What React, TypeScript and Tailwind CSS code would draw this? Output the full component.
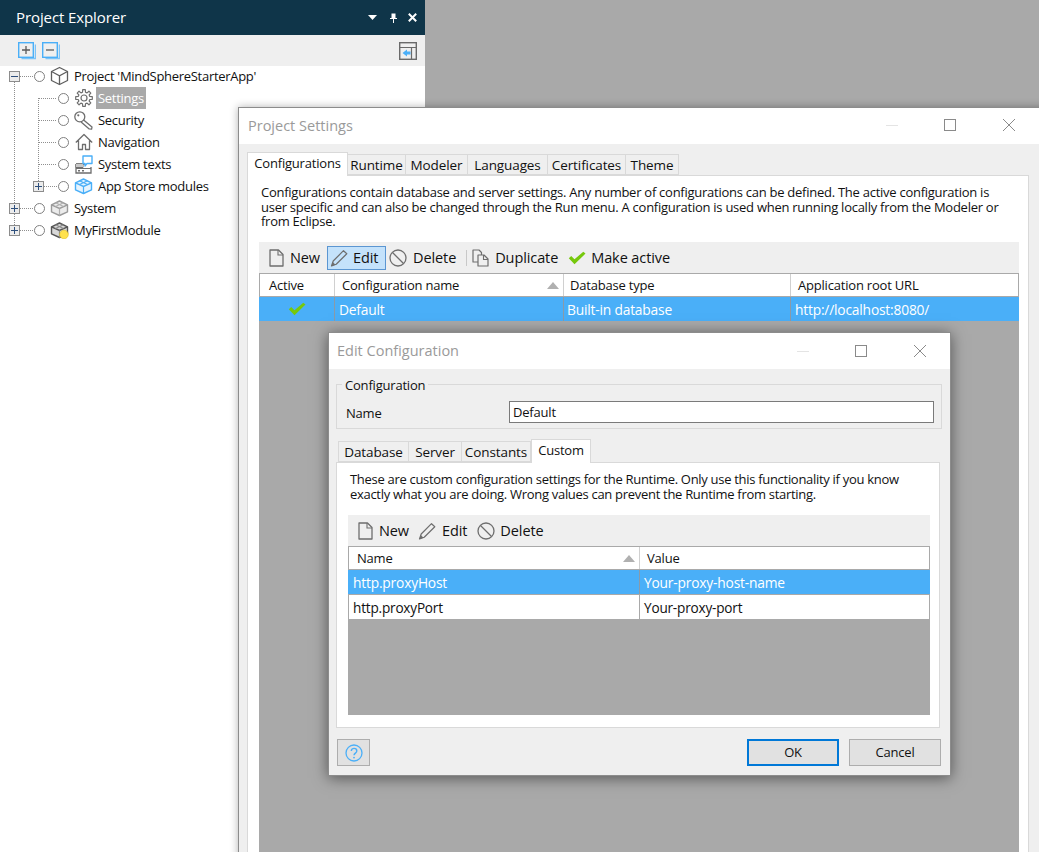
import React from "react";

const G = "#6e6e6e";

function Svg({ w, h, className, children }: { w: number; h: number; className?: string; children: React.ReactNode }) {
  return (
    <svg width={w} height={h} viewBox={`0 0 ${w} ${h}`} fill="none" className={`shrink-0 ${className ?? ""}`}>
      {children}
    </svg>
  );
}

const Cube = () => (
  <Svg w={19} h={20}>
    <path d="M9.500 1.500 17.500 5.500v9L9.500 18.500 1.500 14.500v-9Z" stroke="#5f5f5f" strokeWidth="1.300" strokeLinejoin="round" />
    <path d="M1.500 5.500 9.500 9.800 17.500 5.500M9.500 9.800v8.700" stroke="#5f5f5f" strokeWidth="1.300" />
  </Svg>
);

const Module = ({ color, fill, band, dot }: { color: string; fill: string; band: string; dot?: boolean }) => (
  <Svg w={19} h={18}>
    <path d="M9.500 2 17.500 5.800v7L9.500 16.500 1.500 12.800v-7Z" fill={fill} stroke={color} strokeWidth="1.400" strokeLinejoin="round" />
    <path d="M1.500 5.800 9.500 9.500 17.500 5.800" stroke={color} strokeWidth="1.400" />
    <path d="M9.500 9.500v7M5.500 3.800l8 3.700M13.500 3.800l-8 3.700" stroke={band} strokeWidth="1.200" />
    {dot && <circle cx="14" cy="13.500" r="4.300" fill="#ffe14d" stroke="#e0bf1a" strokeWidth="0.600" />}
  </Svg>
);

function gearPath(cx: number, cy: number, ro: number, ri: number, teeth: number) {
  const pts: string[] = [];
  const step = (Math.PI * 2) / teeth;
  for (let i = 0; i < teeth; i++) {
    const a = i * step - Math.PI / 2;
    const o = step * 0.2;
    const n = step * 0.32;
    const list: [number, number][] = [
      [ri, a - n],
      [ro, a - o],
      [ro, a + o],
      [ri, a + n],
    ];
    for (const [r, t] of list) pts.push(`${(cx + r * Math.cos(t)).toFixed(2)} ${(cy + r * Math.sin(t)).toFixed(2)}`);
  }
  return "M" + pts.join("L") + "Z";
}

const Gear = () => (
  <Svg w={18} h={18}>
    <circle cx="9" cy="9" r="3" stroke={G} strokeWidth="1.200" />
    <path d={gearPath(9, 9, 8.4, 6, 8)} stroke={G} strokeWidth="1.200" strokeLinejoin="round" />
  </Svg>
);

const Key = () => (
  <Svg w={19} h={19}>
    <circle cx="5.800" cy="5.800" r="5" stroke={G} strokeWidth="1.300" />
    <circle cx="4.300" cy="4.300" r="1.100" fill={G} />
    <path d="m9.600 9 8.400 7-.4 2.200-2.400-.3-8.100-7" stroke={G} strokeWidth="1.300" strokeLinejoin="round" />
  </Svg>
);

const Home = () => (
  <Svg w={18} h={18}>
    <path d="M.8 9.500 9 1.500l8.200 8M3.500 7.500v9h4v-5h3v5h4v-9" stroke={G} strokeWidth="1.300" strokeLinejoin="round" />
  </Svg>
);

const SysTexts = () => (
  <Svg w={18} h={19}>
    <path d="M1 9h9M1 9v9h15V12" stroke={G} strokeWidth="1.300" />
    <path d="M1 9h7v3.500H1zM1 13.500h15" stroke={G} strokeWidth="1" />
    <rect x="1" y="9" width="7" height="3" fill="#c8c8c8" />
    <path d="M3 15.800h2M7 15.800h2" stroke={G} strokeWidth="1.500" />
    <path d="M8 1h9v7.500h-5l-2 2.500V8.500H8Z" fill="#fff" stroke="#4aaff8" strokeWidth="1.400" strokeLinejoin="round" />
  </Svg>
);

const Plus = () => (
  <span className="w-[11px] h-[11px] border border-[#8c8c8c] bg-[#ececec] flex items-center justify-center shrink-0">
    <Svg w={9} h={9}>
      <path d="M1 4.500h7M4.500 1v7" stroke="#2e4f7c" strokeWidth="1" />
    </Svg>
  </span>
);
const Minus = () => (
  <span className="w-[11px] h-[11px] border border-[#8c8c8c] bg-[#ececec] flex items-center justify-center shrink-0">
    <Svg w={9} h={9}>
      <path d="M1 4.500h7" stroke="#2e4f7c" strokeWidth="1" />
    </Svg>
  </span>
);

const Radio = () => <span className="w-[11px] h-[11px] rounded-full border border-[#808080] bg-white shrink-0" />;

function TreeRow({
  depth,
  expander,
  icon,
  label,
  selected,
}: {
  depth: 0 | 1;
  expander?: React.ReactNode;
  icon: React.ReactNode;
  label: string;
  selected?: boolean;
}) {
  return (
    <div className={`h-[22px] flex items-center ${depth === 0 ? "pl-[9px]" : "pl-[33px]"}`}>
      <span className="w-[11px] h-[11px] shrink-0">{expander}</span>
      <span className="w-[14px] shrink-0" />
      <Radio />
      <span className="w-[5px] shrink-0" />
      <span className="w-[19px] flex justify-center shrink-0">{icon}</span>
      <span
        className={`ml-[3px] h-[22px] px-[2px] flex items-center whitespace-nowrap tracking-[-0.3px] ${
          selected ? "bg-[#a9a9a9] text-white" : "text-[#111]"
        }`}
      >
        {label}
      </span>
    </div>
  );
}

function TreeLines() {
  const d = "#8f8f8f";
  return (
    <svg width={80} height={180} className="absolute left-0 top-0 pointer-events-none" fill="none">
      <g stroke={d} strokeDasharray="1 1">
        <path d="M14.500 17V165" />
        <path d="M38.500 33V121" />
        <path d="M20 11.500h13M20 143.500h13M20 165.500h13M44 121.500h13" />
        <path d="M39 33.500h18M39 55.500h18M39 77.500h18M39 99.500h18" />
      </g>
    </svg>
  );
}

function DocIcon() {
  return (
    <Svg w={15} h={18}>
      <path d="M1 1h8.500L14 5.500V17H1Z" stroke={G} strokeWidth="1.300" strokeLinejoin="round" />
      <path d="M9 1v5h5" stroke={G} strokeWidth="1.100" />
    </Svg>
  );
}
function PenIcon() {
  return (
    <Svg w={19} h={18}>
      <path d="M3.200 12 13.500 1.700l3.300 3L6.200 15.200 1.500 17Z" stroke={G} strokeWidth="1.200" strokeLinejoin="round" />
      <path d="M1.500 17 2.800 13 5.500 15.700Z" fill={G} />
    </Svg>
  );
}
function BanIcon() {
  return (
    <Svg w={18} h={18}>
      <circle cx="9" cy="9" r="8" stroke={G} strokeWidth="1.300" />
      <path d="M3.500 3.500l11 11" stroke={G} strokeWidth="1.300" />
    </Svg>
  );
}
function DupIcon() {
  return (
    <Svg w={17} h={18}>
      <path d="M6 13H1V1h6l2.500 2.500V6" stroke={G} strokeWidth="1.200" strokeLinejoin="round" />
      <path d="M6 6h6l4 4v7H6Z" stroke={G} strokeWidth="1.200" strokeLinejoin="round" />
      <path d="M11.500 6v4.500H16" stroke={G} strokeWidth="1.100" />
    </Svg>
  );
}
function Check() {
  return (
    <svg width={18} height={14} viewBox="0 0 18 14" className="shrink-0">
      <path d="M.8 7.200 3.200 5l3.300 3.300L15.300.7l2.200 1.900L6.500 13.300Z" fill="#76c80c" />
    </svg>
  );
}

function WinButtons() {
  return (
    <div className="flex items-center h-full">
      <span className="w-[12px] h-px bg-[#e4e4e4]" />
      <span className="ml-[46px] w-[12px] h-[12px] border border-[#8a8a8a]" />
      <Svg w={14} h={14} className="ml-[46px]">
        <path d="M1 1l12 12M13 1 1 13" stroke="#8a8a8a" strokeWidth="1" />
      </Svg>
    </div>
  );
}

function Tabs({ items, active, left }: { items: { l: string; w: string }[]; active: string; left: string }) {
  return (
    <div className={`flex items-end h-[23px] relative z-10 ${left}`}>
      {items.map((t) =>
        t.l === active ? (
          <div
            key={t.l}
            className={`${t.w} h-[24px] -mb-px bg-white border border-[#d9d9d9] border-b-0 flex items-start justify-center pt-[3px] whitespace-nowrap text-[#111]`}
          >
            {t.l}
          </div>
        ) : (
          <div
            key={t.l}
            className={`${t.w} h-[21px] pt-px bg-[#efefef] border border-[#d9d9d9] border-l-0 first:border-l flex items-center justify-center whitespace-nowrap text-[#111] text-[13.500px] tracking-[-0.1px]`}
          >
            {t.l}
          </div>
        )
      )}
    </div>
  );
}

function ToolItem({ icon, label, cls, gap }: { icon: React.ReactNode; label: string; cls?: string; gap: string }) {
  return (
    <div className={`flex items-center whitespace-nowrap text-[#111] text-[14.500px] tracking-[-0.1px] ${gap} ${cls ?? ""}`}>
      {icon}
      <span>{label}</span>
    </div>
  );
}

const Sort = () => (
  <svg width={12} height={7} className="shrink-0">
    <path d="M0 7 6 0l6 7Z" fill="#b0b0b0" />
  </svg>
);

export default function App() {
  return (
    <div className="relative w-[1039px] h-[852px] overflow-hidden bg-[#a9a9a9] font-['Open_Sans',sans-serif] text-[13px] leading-[15px] tracking-[-0.2px]">
      {/* Project Explorer panel */}
      <div className="w-[425px] h-[852px] bg-white flex flex-col">
        <div className="h-[35px] bg-[#0f3549] flex items-center pl-[16px] pr-[8px] text-white">
          <span className="text-[15px] tracking-[-0.1px]">Project Explorer</span>
          <div className="ml-auto flex items-center">
            <svg width={9} height={5} className="mr-[13px]">
              <path d="M0 0h9L4.500 5Z" fill="#fff" />
            </svg>
            <svg width={7} height={10} className="mr-[11px]" fill="none">
              <path d="M1.500 .5h4v4.500h1.500v1H0V5h1.500ZM3 6h1v4H3Z" fill="#fff" />
            </svg>
            <svg width={9} height={9} fill="none">
              <path d="M.8.8l7.400 7.400M8.200.8.800 8.200" stroke="#fff" strokeWidth="2" />
            </svg>
          </div>
        </div>
        <div className="h-[31px] bg-[#efefef] flex items-center pl-[18px] pr-[8px]">
          <svg width={18} height={18} fill="none" className="mr-[6px]">
            <path d="M3.500 16.500h14v-14" stroke="#7cc3f7" strokeWidth="1.500" />
            <rect x=".7" y=".7" width="14.600" height="14.600" stroke="#4aaff8" strokeWidth="1.400" />
            <path d="M4 8h8M8 4v8" stroke="#5a5a5a" strokeWidth="1.300" />
          </svg>
          <svg width={18} height={18} fill="none">
            <path d="M3.500 16.500h14v-14" stroke="#7cc3f7" strokeWidth="1.500" />
            <rect x=".7" y=".7" width="14.600" height="14.600" stroke="#4aaff8" strokeWidth="1.400" />
            <path d="M4 8h8" stroke="#5a5a5a" strokeWidth="1.300" />
          </svg>
          <svg width={18} height={18} fill="none" className="ml-auto">
            <rect x=".7" y=".7" width="16.600" height="16.600" stroke="#6a6a6a" strokeWidth="1.400" />
            <path d="M1 5.500h16M12.500 6v11" stroke="#6a6a6a" strokeWidth="1.200" />
            <path d="M3.500 11 8 7.500V9.500h3.500v3H8v2Z" fill="#4aaff8" />
          </svg>
        </div>
        <div className="relative -mt-px">
          <TreeLines />
          <div className="relative">
            <TreeRow depth={0} expander={<Minus />} icon={<Cube />} label="Project 'MindSphereStarterApp'" />
            <TreeRow depth={1} icon={<Gear />} label="Settings" selected />
            <TreeRow depth={1} icon={<Key />} label="Security" />
            <TreeRow depth={1} icon={<Home />} label="Navigation" />
            <TreeRow depth={1} icon={<SysTexts />} label="System texts" />
            <TreeRow depth={1} expander={<Plus />} icon={<Module color="#4aaff8" fill="#e6f4fe" band="#4aaff8" />} label="App Store modules" />
            <TreeRow depth={0} expander={<Plus />} icon={<Module color="#9a9a9a" fill="#ececec" band="#b0b0b0" />} label="System" />
            <TreeRow depth={0} expander={<Plus />} icon={<Module color="#555" fill="#d8d8d8" band="#8c8c8c" dot />} label="MyFirstModule" />
          </div>
        </div>
      </div>

      {/* Project Settings window */}
      <div className="absolute left-[238px] top-[107px] w-[815px] h-[760px] border border-[#8c8c8c] bg-[#efefef] shadow-[0_0_8px_rgba(0,0,0,0.3)] flex flex-col">
        <div className="h-[36px] bg-white flex items-center pl-[9px] pr-[36px] shrink-0">
          <span className="pb-[2px] text-[14.500px] text-[#9a9a9a] tracking-normal">Project Settings</span>
          <div className="ml-auto h-full pb-[2px]">
            <WinButtons />
          </div>
        </div>
        <div className="pt-[8px] flex flex-col flex-1 min-h-0">
          <Tabs
            left="ml-[8px]"
            active="Configurations"
            items={[
              { l: "Configurations", w: "w-[101px]" },
              { l: "Runtime", w: "w-[58px]" },
              { l: "Modeler", w: "w-[62px]" },
              { l: "Languages", w: "w-[80px]" },
              { l: "Certificates", w: "w-[78px]" },
              { l: "Theme", w: "w-[53px]" },
            ]}
          />
          <div className="ml-[8px] w-[782px] flex-1 bg-white border border-[#d9d9d9] flex flex-col">
            <p className="pl-[13px] pt-[9px] h-[66px] whitespace-nowrap text-[#111] leading-[14.500px] tracking-[-0.26px]">
              Configurations contain database and server settings. Any number of configurations can be defined. The active configuration is
              <br />
              user specific and can also be changed through the Run menu. A configuration is used when running locally from the Modeler or
              <br />
              from Eclipse.
            </p>
            <div className="ml-[11px] mr-[9px] flex-1 flex flex-col">
              <div className="h-[31px] bg-[#efefef] flex items-center pl-[10px] shrink-0">
                <ToolItem icon={<DocIcon />} label="New" gap="gap-[6px]" />
                <div className="ml-[7px] h-[24px] w-[59px] bg-[#c4e2fb] border border-[#5b96d2] flex items-center pl-[2px]">
                  <ToolItem icon={<PenIcon />} label="Edit" gap="gap-[4px]" />
                </div>
                <ToolItem icon={<BanIcon />} label="Delete" gap="gap-[6px]" cls="ml-[3px]" />
                <span className="ml-[10px] w-px h-[16px] bg-[#c8c8c8]" />
                <ToolItem icon={<DupIcon />} label="Duplicate" gap="gap-[6px]" cls="ml-[5px]" />
                <ToolItem icon={<Check />} label="Make active" gap="gap-[5px]" cls="ml-[10px]" />
              </div>
              <div className="h-[24px] flex items-center border-t border-b border-[#a9a9a9] border-r bg-white shrink-0 border-l text-[#111]">
                <div className="w-[75px] pl-[9px] h-full flex items-center border-r border-[#d0d0d0]">Active</div>
                <div className="w-[229px] pl-[7px] pr-[4px] h-full flex items-center justify-between border-r border-[#d0d0d0]">
                  <span>Configuration name</span>
                  <Sort />
                </div>
                <div className="w-[227px] pl-[6px] h-full flex items-center border-r border-[#d0d0d0]">Database type</div>
                <div className="flex-1 pl-[7px] h-full flex items-center">Application root URL</div>
              </div>
              <div className="h-[25px] flex items-center border-b border-[#a9a9a9] bg-[#4aaff8] text-white shrink-0 text-[13.800px]">
                <div className="w-[76px] h-full flex items-center justify-center border-r border-[#8a9aa8]">
                  <Check />
                </div>
                <div className="w-[229px] pl-[4px] pt-px h-full flex items-center border-r border-[#8a9aa8]">Default</div>
                <div className="w-[227px] pl-[3px] pt-px h-full flex items-center border-r border-[#8a9aa8]">Built-in database</div>
                <div className="flex-1 pl-[4px] pt-px h-full flex items-center">http://localhost:8080/</div>
              </div>
              <div className="flex-1 bg-[#a9a9a9]" />
            </div>
          </div>
        </div>
      </div>

      {/* Edit Configuration window */}
      <div className="absolute left-[328px] top-[332px] w-[623px] h-[444px] border border-[#8c8c8c] bg-[#efefef] shadow-[0_2px_14px_rgba(0,0,0,0.5)] flex flex-col">
        <div className="h-[36px] bg-white flex items-center pl-[8px] pr-[23px] shrink-0">
          <span className="pb-px text-[14.500px] text-[#9a9a9a] tracking-normal">Edit Configuration</span>
          <div className="ml-auto h-full">
            <WinButtons />
          </div>
        </div>
        <div className="relative mx-[7px] mt-[15px] w-[606px] h-[45px] border border-[#d9d9d9] flex items-center shrink-0">
          <span className="absolute left-[5px] -top-[7px] px-[3px] bg-[#efefef] text-[#111]">Configuration</span>
          <span className="pl-[9px] pt-[14px] text-[#111]">Name</span>
          <div className="absolute left-[172px] top-[16px] w-[425px] h-[22px] bg-white border border-[#7a7a7a] flex items-center pl-[3px] text-[#111]">
            Default
          </div>
        </div>
        <div className="mt-[10px] shrink-0">
          <Tabs
            left="ml-[9px]"
            active="Custom"
            items={[
              { l: "Database", w: "w-[71px]" },
              { l: "Server", w: "w-[53px]" },
              { l: "Constants", w: "w-[69px]" },
              { l: "Custom", w: "w-[60px]" },
            ]}
          />
        </div>
        <div className="ml-[7px] w-[604px] h-[266px] bg-white border border-[#d9d9d9] shrink-0 flex flex-col">
          <p className="pl-[13px] pt-[9px] h-[52px] whitespace-nowrap text-[#111] leading-[15px] tracking-[-0.3px]">
            These are custom configuration settings for the Runtime. Only use this functionality if you know
            <br />
            exactly what you are doing. Wrong values can prevent the Runtime from starting.
          </p>
          <div className="mx-[11px] w-[582px] h-[200px] flex flex-col">
            <div className="h-[31px] bg-[#efefef] flex items-center pl-[10px] shrink-0">
              <ToolItem icon={<DocIcon />} label="New" gap="gap-[6px]" />
              <ToolItem icon={<PenIcon />} label="Edit" gap="gap-[5px]" cls="ml-[9px]" />
              <ToolItem icon={<BanIcon />} label="Delete" gap="gap-[5px]" cls="ml-[10px]" />
            </div>
            <div className="h-[24px] flex items-center border-t border-b border-[#a9a9a9] border-x bg-white shrink-0 text-[#111]">
              <div className="w-[291px] pl-[8px] pr-[4px] h-full flex items-center justify-between border-r border-[#d0d0d0]">
                <span>Name</span>
                <Sort />
              </div>
              <div className="flex-1 pl-[7px] h-full flex items-center">Value</div>
            </div>
            <div className="h-[25px] flex items-center border-b border-[#a9a9a9] bg-[#4aaff8] text-white shrink-0 text-[13.800px]">
              <div className="w-[292px] pl-[5px] pt-px h-full flex items-center border-r border-[#8a9aa8]">http.proxyHost</div>
              <div className="flex-1 pl-[4px] pt-px h-full flex items-center">Your-proxy-host-name</div>
            </div>
            <div className="h-[25px] flex items-center border-b border-x border-[#a9a9a9] bg-white text-[#111] shrink-0 text-[13.600px]">
              <div className="w-[291px] pl-[4px] pt-px h-full flex items-center border-r border-[#a9a9a9]">http.proxyPort</div>
              <div className="flex-1 pl-[4px] pt-px h-full flex items-center">Your-proxy-port</div>
            </div>
            <div className="flex-1 bg-[#a9a9a9]" />
          </div>
        </div>
        <div className="flex items-center mt-[11px] pl-[8px] shrink-0">
          <div className="w-[33px] h-[27px] bg-[#e1e1e1] border border-[#adadad] flex items-center justify-center">
            <svg width={18} height={18} fill="none">
              <circle cx="9" cy="9" r="8" stroke="#4aaff8" strokeWidth="1.300" />
              <path d="M6.300 7c0-3.500 5.500-3.500 5.500 0 0 2-2.800 2.200-2.800 4.300" stroke="#4aaff8" strokeWidth="1.400" />
              <circle cx="9" cy="13.600" r=".9" fill="#4aaff8" />
            </svg>
          </div>
          <div className="ml-[377px] w-[92px] h-[27px] bg-[#e1e1e1] border-2 border-[#0078d7] flex items-center justify-center text-[#111]">OK</div>
          <div className="ml-[10px] w-[92px] h-[27px] bg-[#e1e1e1] border border-[#adadad] flex items-center justify-center text-[#111]">Cancel</div>
        </div>
      </div>
    </div>
  );
}
